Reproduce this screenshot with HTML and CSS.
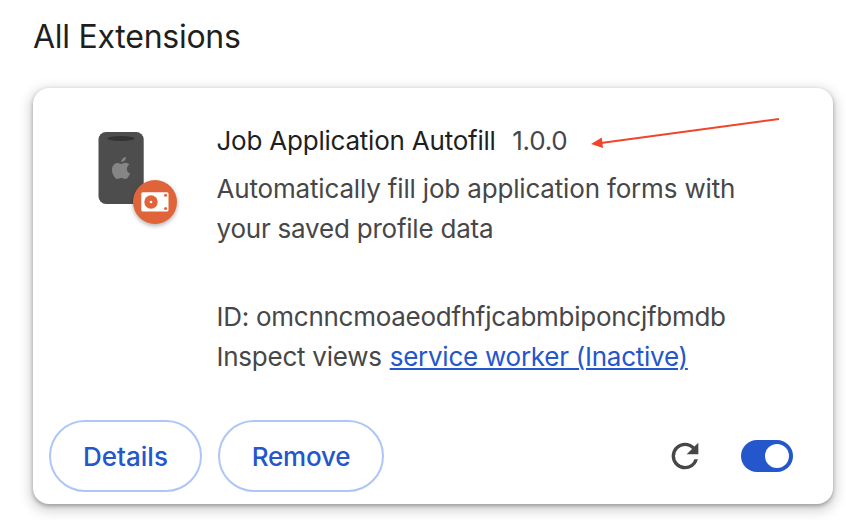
FILE: index.html
```
<!DOCTYPE html>
<html lang="en">
<head>
<meta charset="utf-8">
<title>Extensions</title>
<link rel="stylesheet" href="styles.css">
</head>
<body>
<h1 class="heading">All Extensions</h1>
<article class="card">
  <div class="main">
    <svg class="icon" viewBox="0 0 96 112" width="96" height="112" aria-hidden="true">
      <rect x="9.5" y="4" width="45.2" height="72" rx="7.5" fill="#4d4d4d"/>
      <ellipse cx="32" cy="10.6" rx="13.5" ry="2.5" fill="#333"/>
      <path transform="translate(23 29)" fill="#858585" d="M13.9 0C14.2 2.5 11.8 5 9.3 5 9.1 2.500 11.500.300 13.900 0ZM17.200 7.700C15.700 8.700 14.900 10 14.900 11.900 14.900 14 16.100 15.600 18 16.400 17.200 18.700 15.200 22 13.300 22 11.700 22 11.300 21.100 9.200 21.100S6.600 22 5.200 22C3.100 22 0 17.300 0 12.700 0 8.500 2.600 5.900 5.500 5.900 7.200 5.900 8.300 6.900 9.500 6.900 10.600 6.900 12 5.800 13.800 5.800 15.200 5.800 16.500 6.500 17.200 7.700Z"/>
      <circle class="badge" cx="66" cy="74" r="22" fill="#e0643a"/>
      <rect x="52.300" y="64.300" width="27.200" height="19.200" rx="1.500" fill="#fff"/>
      <circle cx="62" cy="74" r="6.700" fill="#e0643a"/>
      <circle cx="62" cy="74" r="1.300" fill="#fff"/>
      <circle cx="76.600" cy="67.300" r="1.500" fill="#e0643a"/>
      <circle cx="76.600" cy="80.500" r="1.500" fill="#e0643a"/>
    </svg>
    <div class="content">
      <div class="title-row">
        <span class="name">Job Application Autofill</span>
        <span class="version">1.0.0</span>
        <svg class="arrow" viewBox="0 0 192 36" width="192" height="36" aria-hidden="true">
          <path d="M10 26 188 2" stroke="#f0452a" stroke-width="2"/>
          <path d="M0 27 10.800 20.500 12 31Z" fill="#f0452a"/>
        </svg>
      </div>
      <p class="description"><span class="desc-start">Automatically fill job application forms with</span><br><span class="desc-end">your saved profile data</span></p>
      <div class="ext-id">ID: omcnncmoaeodfhfjcabmbiponcjfbmdb</div>
      <div class="views"><span class="label">Inspect views</span><a class="link">service worker (Inactive)</a></div>
    </div>
  </div>
  <div class="actions">
    <button class="button details">Details</button>
    <button class="button remove">Remove</button>
    <svg class="reload" viewBox="0 0 24 24" width="40" height="40" aria-label="Reload"><path fill="#474747" d="M17.650 6.350A7.958 7.958 0 0 0 12 4a8 8 0 1 0 7.730 10h-2.080A5.990 5.990 0 0 1 12 18a6 6 0 1 1 0-12c1.660 0 3.140.690 4.220 1.780L13 11h7V4z"/></svg>
    <span class="toggle"><span class="knob"></span></span>
  </div>
</article>
</body>
</html>
```
FILE: styles.css
```
* { box-sizing: border-box; }

body {
  margin: 0;
  height: 520px;
  overflow: hidden;
  padding: 17px 13px 0 33px;
  background: #fff;
  color: #474747;
  font: 400 26px/40px Inter, "Liberation Sans", sans-serif;
  letter-spacing: -.22px;
}

.heading {
  margin: 0 0 31px;
  color: #1f1f1f;
  font-size: 32px;
  font-weight: 400;
  line-height: 40px;
  letter-spacing: -.26px;
}

.card {
  display: flex;
  flex-direction: column;
  width: 800px;
  height: 416px;
  border-radius: 16px;
  background: #fff;
  box-shadow: 0 2px 4px rgba(0, 0, 0, .3), 0 4px 12px 4px rgba(0, 0, 0, .15);
}

.main {
  display: flex;
  flex: 1;
  gap: 31.5px;
  padding: 33px 0 0 56px;
}

.icon {
  flex: none;
  margin-top: 7px;
}

.badge { filter: drop-shadow(0 2px 2px rgba(0, 0, 0, .3)); }

.title-row {
  display: flex;
  height: 48px;
}

.name {
  margin-right: 16.5px;
  color: #1f1f1f;
}

.arrow { margin: -4px 0 0 24px; }

.description { margin: 0 0 48px; }

.desc-start { letter-spacing: -.17px; }

.ext-id { letter-spacing: -.27px; }

.views {
  display: flex;
  letter-spacing: -.25px;
}

.label { margin-right: 8px; }

.link {
  color: #2456cc;
  text-decoration: underline;
  text-decoration-thickness: 2px;
  text-underline-offset: 2px;
}

.name, .version, .description, .ext-id, .label, .link { white-space: nowrap; }

.actions {
  display: flex;
  align-items: center;
  height: 96px;
  padding: 0 40px 0 16px;
}

.button {
  height: 72px;
  margin: 0 16px 0 0;
  padding: 2px 0 0;
  border: 2px solid #adc6f7;
  border-radius: 36px;
  background: #fff;
  color: #2456cc;
  font: 500 26px/40px Inter, "Liberation Sans", sans-serif;
}

.details { width: 153px; }

.remove {
  width: 166px;
  letter-spacing: -.2px;
}

.reload { margin: 0 36px 0 auto; }

.toggle {
  display: flex;
  justify-content: flex-end;
  width: 52px;
  height: 32px;
  padding: 4px;
  border-radius: 16px;
  background: #2456cc;
}

.knob {
  width: 24px;
  height: 24px;
  border-radius: 50%;
  background: #fff;
}
```
